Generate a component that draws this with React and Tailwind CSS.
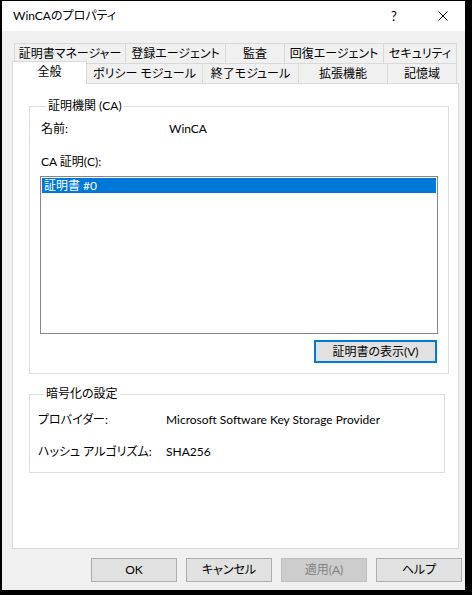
import React from 'react';

const font = {
  fontFamily: 'Lato, "Noto Sans CJK JP", sans-serif',
  fontFeatureSettings: '"palt"',
};

const backTabs = [
  { label: '証明書マネージャー', w: 'w-[112px]' },
  { label: '登録エージェント', w: 'w-[100px]' },
  { label: '監査', w: 'w-[59px]' },
  { label: '回復エージェント', w: 'w-[99px]' },
  { label: 'セキュリティ', w: 'w-[73px]' },
];

const frontTabs = [
  { label: 'ポリシー モジュール', w: 'w-[116px]' },
  { label: '終了モジュール', w: 'w-[96px]' },
  { label: '拡張機能', w: 'w-[89px]' },
  { label: '記憶域', w: 'w-[69px]' },
];

const GroupBox = ({ title, className, children }) => (
  <fieldset className={`border border-[#dcdcdc] ${className}`}>
    <legend className="ml-[6px] px-[2px] leading-[16px]">{title}</legend>
    {children}
  </fieldset>
);

const DialogButton = ({ children, disabled }) => (
  <button
    type="button"
    className={`w-[86px] h-[24px] border flex items-center justify-center ${
      disabled ? 'bg-[#cccccc] border-[#bfbfbf] text-[#838383]' : 'bg-[#e1e1e1] border-[#adadad] text-black'
    }`}
  >
    {children}
  </button>
);

export default function App() {
  return (
    <div className="w-[472px] h-[595px] bg-black pt-[1px] pl-[2px] text-[12px] text-black" style={font}>
      <div className="w-[463px] h-[589px] bg-[#f0f0f0] flex flex-col">
        {/* title bar */}
        <div className="h-[30px] bg-white flex items-center pl-[11px] shrink-0">
          <span className="flex-1 leading-none">WinCAのプロパティ</span>
          <span className="w-[10px] mr-[37px] leading-none text-[13px]">?</span>
          <svg width="10" height="10" viewBox="0 0 10 10" className="mr-[17px]">
            <path d="M0.5 0.5 L9.5 9.5 M9.5 0.5 L0.5 9.5" stroke="#000" strokeWidth="1" fill="none" />
          </svg>
        </div>

        {/* tabs */}
        <div className="pt-[12px] pl-[10px]">
          <div className="flex ml-[2px] h-[20px]">
            {backTabs.map((t, i) => (
              <div
                key={t.label}
                className={`${t.w} border-t border-r border-[#d9d9d9] ${i === 0 ? 'border-l' : ''} flex items-center justify-center bg-[#f0f0f0] leading-none`}
              >
                {t.label}
              </div>
            ))}
          </div>
          <div className="flex items-end h-[20px] relative z-10">
            <div className="w-[75px] h-[23px] -mb-[1px] bg-white border-t border-l border-r border-[#d9d9d9] flex items-center justify-center leading-none pb-[2px]">
              全般
            </div>
            {frontTabs.map((t) => (
              <div
                key={t.label}
                className={`${t.w} h-[20px] border-t border-r border-[#d9d9d9] flex items-center justify-center leading-none`}
              >
                {t.label}
              </div>
            ))}
          </div>

          {/* panel */}
          <div className="w-[447px] h-[466px] bg-white border border-[#d9d9d9] pt-[14px] pl-[16px]">
            <GroupBox title="証明機関 (CA)" className="w-[416px] h-[276px] px-[10px]">
              <div className="flex items-center h-[16px] mt-[7px]">
                <span className="w-[129px] pl-[1px]">名前:</span>
                <span>WinCA</span>
              </div>
              <div className="h-[16px] mt-[17px] flex items-center pl-[1px]">CA 証明(C):</div>
              <div className="w-[398px] h-[158px] mt-[6px] border border-[#828790] p-[1px]">
                <div className="h-[15px] bg-[#0078d7] text-white flex items-center pl-[2px] leading-none">
                  証明書 #0
                </div>
              </div>
              <div className="flex justify-end w-[397px] mt-[6px]">
                <button
                  type="button"
                  className="w-[123px] h-[23px] bg-[#e1e1e1] border-2 border-[#0078d7] flex items-center justify-center"
                >
                  証明書の表示(V)
                </button>
              </div>
            </GroupBox>

            <GroupBox title="暗号化の設定" className="w-[416px] h-[87px] mt-[12px] px-[8px]">
              <div className="flex items-center h-[16px] mt-[10px]">
                <span className="w-[128px]">プロバイダー:</span>
                <span>Microsoft Software Key Storage Provider</span>
              </div>
              <div className="flex items-center h-[16px] mt-[16px]">
                <span className="w-[128px]">ハッシュ アルゴリズム:</span>
                <span>SHA256</span>
              </div>
            </GroupBox>
          </div>
        </div>

        {/* buttons */}
        <div className="flex gap-[9px] pl-[89px] mt-[9px]">
          <DialogButton>OK</DialogButton>
          <DialogButton>キャンセル</DialogButton>
          <DialogButton disabled>適用(A)</DialogButton>
          <DialogButton>ヘルプ</DialogButton>
        </div>
      </div>
    </div>
  );
}
